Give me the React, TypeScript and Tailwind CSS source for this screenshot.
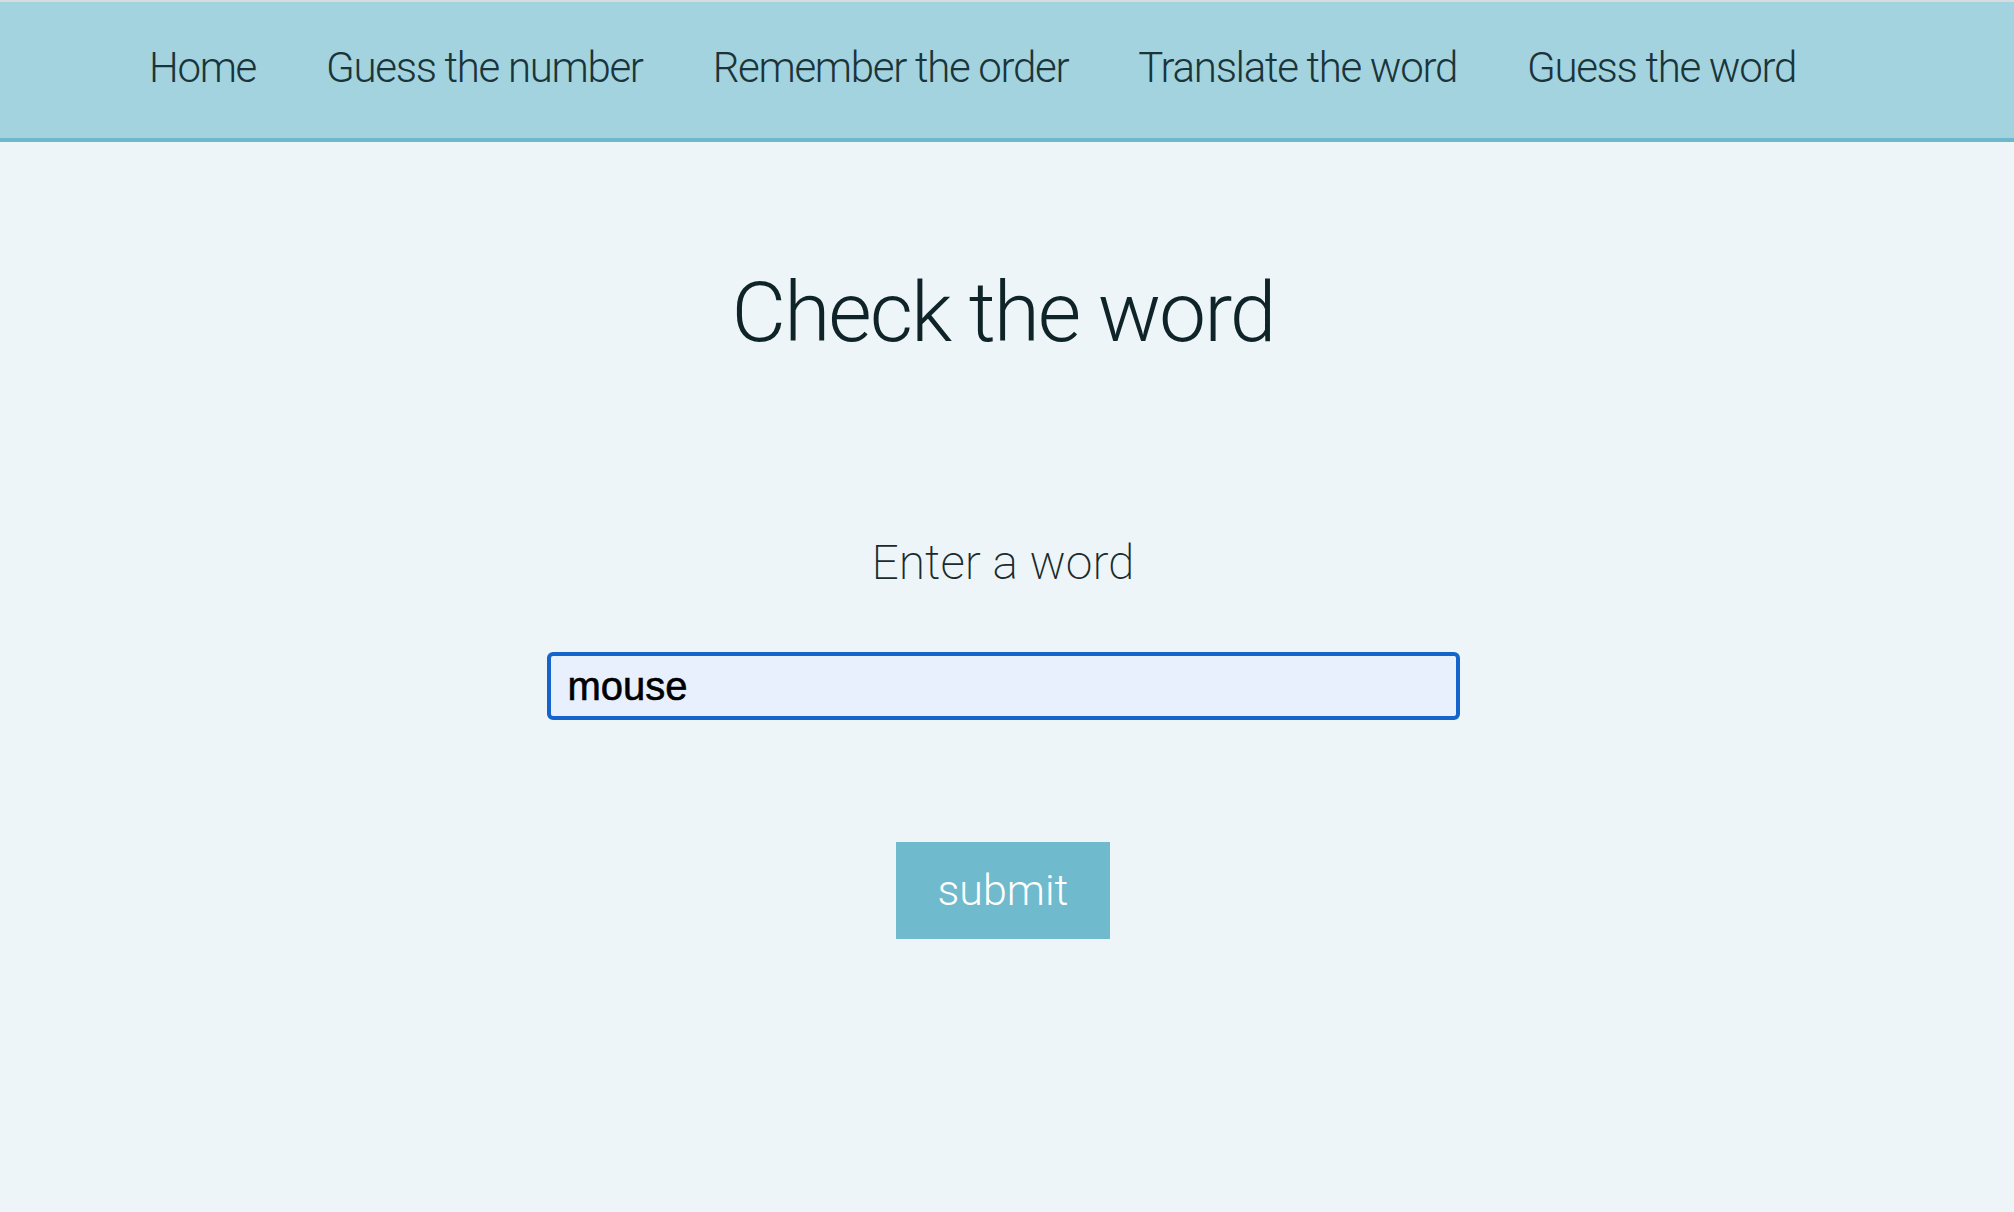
const links = ['Home', 'Guess the number', 'Remember the order', 'Translate the word', 'Guess the word']

export default function App() {
  return (
    <div className="min-h-[1212px] bg-[#edf5f8] font-['Roboto',sans-serif]">
      {/* Top navigation */}
      <nav className="h-[142px] border-t-2 border-b-4 border-t-[#d6dcdf] border-b-[#6db8cb] bg-[#a2d3de] pl-[149px] pt-[45px]">
        <ul className="flex gap-[70px]">
          {links.map((link) => (
            <li key={link}>
              <a href="#" className="text-[42px] leading-none font-light tracking-[-1.3px] text-[#1b3439]">
                {link}
              </a>
            </li>
          ))}
        </ul>
      </nav>

      <main className="flex flex-col items-center pr-2">
        <h1 className="mt-[129px] text-[84px] leading-none font-light tracking-[-2px] text-[#0f2428]">
          Check the word
        </h1>

        <form className="flex flex-col items-center" onSubmit={(e) => e.preventDefault()}>
          <label htmlFor="word" className="mt-[184px] text-[48px] leading-none font-extralight text-[#1a2b2e]">
            Enter a word
          </label>
          <input
            id="word"
            defaultValue="mouse"
            className="mt-[65px] h-[68px] w-[913px] rounded-[6px] border-[4px] border-[#1464cc] bg-[#e8f0fd] pl-[17px] font-['Liberation_Sans',Arial,sans-serif] text-[40px] text-black outline-none [-webkit-text-stroke:0.6px_black]"
          />
          <button
            type="submit"
            className="mt-[122px] w-[214px] bg-[#6fbacc] py-[27px] text-[43px] leading-none font-light text-white"
          >
            submit
          </button>
        </form>
      </main>
    </div>
  )
}
